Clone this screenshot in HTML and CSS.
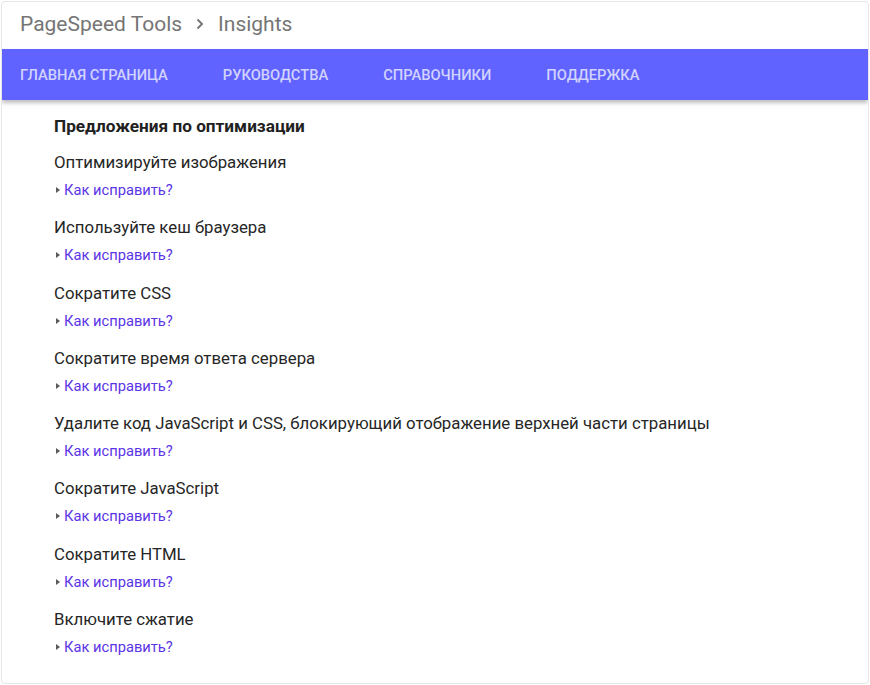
FILE: index.html
```html
<!DOCTYPE html>
<html lang="ru">
<head>
<meta charset="utf-8">
<title>PageSpeed Insights</title>
<link rel="stylesheet" href="styles.css">
</head>
<body>
<div class="card">
  <header class="top">
    <span class="crumb">PageSpeed Tools</span>
    <svg class="chev" width="8" height="12" viewBox="0 0 8 12"><path d="M1.5 1.5 L6 6 L1.5 10.5" fill="none" stroke="#757575" stroke-width="1.9"/></svg>
    <span class="crumb">Insights</span>
  </header>
  <nav class="nav">
    <a>Главная страница</a>
    <a>Руководства</a>
    <a>Справочники</a>
    <a>Поддержка</a>
  </nav>
  <main class="content">
    <h2 class="heading">Предложения по оптимизации</h2>
    <div class="item"><div class="title">Оптимизируйте изображения</div><div class="fix"><span class="tri"></span><a>Как исправить?</a></div></div>
    <div class="item"><div class="title">Используйте кеш браузера</div><div class="fix"><span class="tri"></span><a>Как исправить?</a></div></div>
    <div class="item"><div class="title">Сократите CSS</div><div class="fix"><span class="tri"></span><a>Как исправить?</a></div></div>
    <div class="item"><div class="title">Сократите время ответа сервера</div><div class="fix"><span class="tri"></span><a>Как исправить?</a></div></div>
    <div class="item"><div class="title">Удалите код JavaScript и CSS, блокирующий отображение верхней части страницы</div><div class="fix"><span class="tri"></span><a>Как исправить?</a></div></div>
    <div class="item"><div class="title">Сократите JavaScript</div><div class="fix"><span class="tri"></span><a>Как исправить?</a></div></div>
    <div class="item"><div class="title">Сократите HTML</div><div class="fix"><span class="tri"></span><a>Как исправить?</a></div></div>
    <div class="item"><div class="title">Включите сжатие</div><div class="fix"><span class="tri"></span><a>Как исправить?</a></div></div>
  </main>
</div>
</body>
</html>
```
FILE: styles.css
```css
html, body {
  margin: 0;
  padding: 0;
  background: #ffffff;
}
body {
  font-family: Roboto, "Noto Sans", sans-serif;
  padding: 1px;
  height: 685px;
  box-sizing: border-box;
}
.card {
  height: 683px;
  box-sizing: border-box;
  border: 1px solid #e6e6e6;
  border-radius: 4px;
  overflow: hidden;
  background: #fff;
}
.top {
  height: 47px;
  box-sizing: border-box;
  padding-bottom: 4px;
  display: flex;
  align-items: center;
  padding-left: 18px;
  gap: 13px;
  color: #757575;
  font-size: 21px;
}
.chev {
  margin-left: 1px;
  margin-right: 1px;
}
.nav {
  height: 51px;
  background: #6063ff;
  display: flex;
  align-items: center;
  padding-left: 18px;
  gap: 55px;
  box-shadow: 0 3px 4px rgba(0,0,0,0.25);
  position: relative;
}
.nav a {
  color: rgba(255,255,255,0.72);
  font-size: 14.7px;
  font-weight: 500;
  text-transform: uppercase;
}
.content {
  padding: 16px 0 0 52px;
}
.heading {
  margin: 0 0 14px;
  font-size: 17.2px;
  line-height: 20px;
  font-weight: 700;
  color: #212121;
}
.item {
  margin-bottom: 15.3px;
}
.title {
  font-size: 16.8px;
  line-height: 24px;
  color: #262626;
}
.fix {
  margin-top: 6px;
  display: flex;
  align-items: center;
  height: 20px;
  font-size: 14.7px;
}
.tri {
  width: 0;
  height: 0;
  border-top: 3.5px solid transparent;
  border-bottom: 3.5px solid transparent;
  border-left: 4px solid #5a5a5a;
  margin-left: 2px;
  margin-right: 4px;
}
.fix a {
  color: #5b34e6;
}
```
